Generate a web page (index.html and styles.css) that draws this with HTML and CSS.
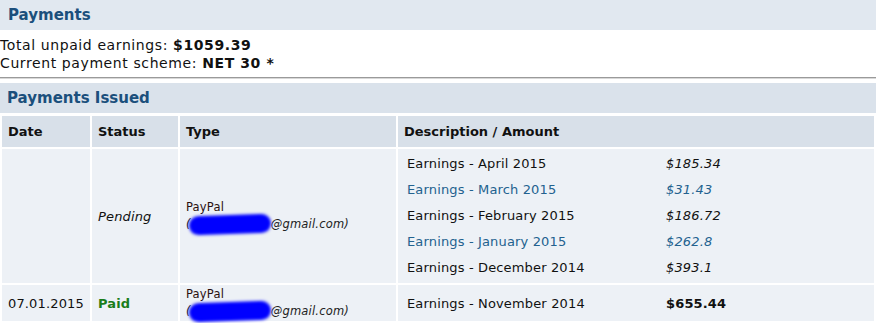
FILE: index.html
```html
<!DOCTYPE html>
<html lang="en">
<head>
    <meta charset="UTF-8">
    <title>Payments</title>
    <link rel="stylesheet" href="styles.css">
</head>
<body>
    <h2 class="section-title">Payments</h2>
    <div class="summary">
        Total unpaid earnings: <b>$1059.39</b><br>
        Current payment scheme: <b>NET 30 *</b>
    </div>
    <hr class="divider">

    <h2 class="section-title issued">Payments Issued</h2>
    <table class="payments">
        <thead>
            <tr>
                <th class="col-date">Date</th>
                <th class="col-status">Status</th>
                <th class="col-type">Type</th>
                <th>Description / Amount</th>
            </tr>
        </thead>
        <tbody>
            <tr>
                <td></td>
                <td><i>Pending</i></td>
                <td class="method">
                    PayPal<br>
                    <i>(<span class="redacted"></span>@gmail.com)</i>
                </td>
                <td class="desc">
                    <table class="lines">
                        <tr><td class="what">Earnings - April 2015</td><td class="amt"><i>$185.34</i></td></tr>
                        <tr class="alt"><td class="what">Earnings - March 2015</td><td class="amt"><i>$31.43</i></td></tr>
                        <tr><td class="what">Earnings - February 2015</td><td class="amt"><i>$186.72</i></td></tr>
                        <tr class="alt"><td class="what">Earnings - January 2015</td><td class="amt"><i>$262.8</i></td></tr>
                        <tr><td class="what">Earnings - December 2014</td><td class="amt"><i>$393.1</i></td></tr>
                    </table>
                </td>
            </tr>
            <tr>
                <td>07.01.2015</td>
                <td><b class="paid">Paid</b></td>
                <td class="method">
                    PayPal<br>
                    <i>(<span class="redacted"></span>@gmail.com)</i>
                </td>
                <td class="desc single">
                    <table class="lines">
                        <tr><td class="what">Earnings - November 2014</td><td class="amt"><b>$655.44</b></td></tr>
                    </table>
                </td>
            </tr>
        </tbody>
    </table>
</body>
</html>
```

FILE: styles.css
```css
body {
    margin: 0;
    font-family: "DejaVu Sans", Verdana, sans-serif;
    font-size: 13px;
    color: #111;
    background: #fff;
}

/* section bars */
.section-title {
    margin: 0;
    height: 30px;
    line-height: 30px;
    padding: 0 8px;
    font-size: 15px;
    font-weight: bold;
    color: #1b4f7c;
    background-color: #e1e8f0;
}

.section-title.issued {
    margin-top: 4px;
    padding-left: 7px;
    background-color: #dae2eb;
}

.summary {
    box-sizing: border-box;
    height: 47px;
    padding-top: 6px;
    font-size: 14px;
    line-height: 18px;
    letter-spacing: 0.6px;
}

.divider {
    margin: 0;
    border: none;
    border-top: 1px solid #9a9a9a;
    border-bottom: 1px solid #d8d8d8;
}

/* payments table */
.payments {
    width: 100%;
    border-collapse: separate;
    border-spacing: 2px;
    margin-top: 1px;
}

.payments th {
    height: 31px;
    padding: 0 6px;
    text-align: left;
    font-size: 13px;
    font-weight: bold;
    background-color: #d8e0e9;
}

.payments td {
    padding: 0 6px;
    font-size: 13px;
    letter-spacing: 0.15px;
    background-color: #edf1f6;
}

.col-date { width: 76px; }
.col-status { width: 74px; }
.col-type { width: 204px; }

.payments td.method {
    font-size: 11.5px;
    letter-spacing: 0.2px;
    line-height: 15px;
    color: #2a1010;
}

.method i {
    color: #222;
}

.redacted {
    display: inline-block;
    width: 82px;
    height: 19px;
    margin: 0 0 -6px -2px;
    background-color: #0000ff;
    border-radius: 10px;
    filter: blur(1.5px);
    transform: rotate(-2deg);
}

.paid {
    color: #1a7d1a;
}

.payments td.desc {
    padding: 1px 0 3px;
}

.payments td.desc.single {
    padding: 5px 0;
}

.lines {
    border-collapse: collapse;
}

.payments .lines td {
    height: 26px;
    padding: 0;
    background: none;
}

.payments .lines .what {
    width: 259px;
    padding-left: 9px;
}

.lines .alt td {
    color: #23628f;
}
```
